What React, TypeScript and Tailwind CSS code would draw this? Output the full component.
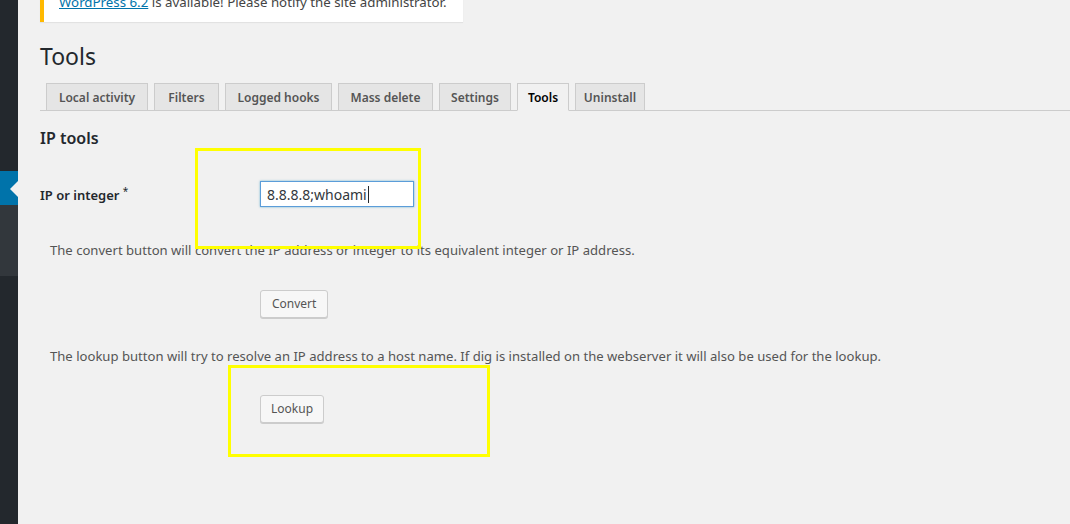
import React from "react";

const tabs: [string, string][] = [
  ["Local activity", "w-[102px]"],
  ["Filters", "w-[65px]"],
  ["Logged hooks", "w-[107px]"],
  ["Mass delete", "w-[95px]"],
  ["Settings", "w-[72px]"],
  ["Tools", "w-[52px]"],
  ["Uninstall", "w-[70px]"],
];

export default function App() {
  return (
    <div
      className="relative flex h-[524px] w-full overflow-hidden bg-[#f1f1f1] text-[13px] text-[#444]"
      style={{ fontFamily: '"Noto Sans", "DejaVu Sans", sans-serif' }}
    >
      {/* admin sidebar */}
      <div className="flex w-[18px] shrink-0 flex-col bg-[#23282d]">
        <div className="h-[171px]" />
        <div className="relative h-[34px] bg-[#0073aa]">
          <div className="absolute right-0 top-[10px] h-0 w-0 border-y-[8px] border-r-[8px] border-y-transparent border-r-[#f1f1f1]" />
        </div>
        <div className="h-[71px] bg-[#32373c]" />
      </div>

      {/* main */}
      <div className="flex min-w-0 flex-1 flex-col pl-[22px]">
        <div className="mt-[-18px] flex h-[40px] w-fit items-end border-l-4 border-[#ffb900] bg-white pb-[10px] pl-[15px] pr-[16px] shadow-[0_1px_1px_rgba(0,0,0,0.06)]">
          <span className="text-[13.3px] leading-[20px] text-[#444]">
            <a className="text-[#0073aa] underline">WordPress 6.2</a> is available! Please notify the site administrator.
          </span>
        </div>

        <h1 className="mt-[19px] text-[23px] font-normal leading-[30px] text-[#23282d]">Tools</h1>

        <div className="mt-[12px] flex border-b border-[#ccc]">
          {tabs.map(([t, w]) => {
            const active = t === "Tools";
            return (
              <div
                key={t}
                className={
                  active
                    ? `ml-[6px] mb-[-1px] h-[28px] ${w} border border-[#ccc] border-b-[#f1f1f1] bg-[#f1f1f1] pt-[1px] text-center text-[12px] font-semibold leading-[26px] text-black`
                    : `ml-[6px] h-[27px] ${w} border border-b-0 border-[#ccc] bg-[#e5e5e5] pt-[1px] text-center text-[12px] font-semibold leading-[26px] text-[#555]`
                }
              >
                {t}
              </div>
            );
          })}
        </div>

        <h2 className="mt-[17px] text-[16px] font-semibold leading-[20px] text-[#23282d]">IP tools</h2>

        <div className="mt-[33px] flex items-center">
          <div className="w-[220px] pt-[4px] text-[13px] font-semibold text-[#23282d]">
            IP or integer <sup className="text-[10px] font-normal">*</sup>
          </div>
          <div className="flex h-[26px] w-[154px] items-center border border-[#5b9dd9] bg-white px-[6px] text-[14px] text-[#32373c] shadow-[0_0_2px_rgba(30,140,190,0.6)]">
            8.8.8.8;whoami<span className="ml-[1px] inline-block h-[17px] w-px bg-[#23282d]" />
          </div>
        </div>

        <p className="ml-[10px] mt-[34px] text-[13.1px] leading-[19px] text-[#555]">
          The convert button will convert the IP address or integer to its equivalent integer or IP address.
        </p>

        <div className="ml-[220px] mt-[30px]">
          <button className="h-[28px] rounded-[3px] border border-[#ccc] bg-[#f7f7f7] px-[11px] text-[12px] leading-[26px] text-[#555] shadow-[0_1px_0_#ccc]">
            Convert
          </button>
        </div>

        <p className="ml-[10px] mt-[29px] text-[13.1px] leading-[19px] text-[#555]">
          The lookup button will try to resolve an IP address to a host name. If dig is installed on the webserver it will also be used for the lookup.
        </p>

        <div className="ml-[220px] mt-[29px]">
          <button className="h-[28px] rounded-[3px] border border-[#ccc] bg-[#f7f7f7] px-[10px] text-[12px] leading-[26px] text-[#555] shadow-[0_1px_0_#ccc]">
            Lookup
          </button>
        </div>
      </div>

      {/* annotation overlays */}
      <div className="pointer-events-none absolute left-[195px] top-[148px] h-[101px] w-[226px] border-[3px] border-[#ffff00]" />
      <div className="pointer-events-none absolute left-[228px] top-[365px] h-[92px] w-[262px] border-[3px] border-[#ffff00]" />
    </div>
  );
}
